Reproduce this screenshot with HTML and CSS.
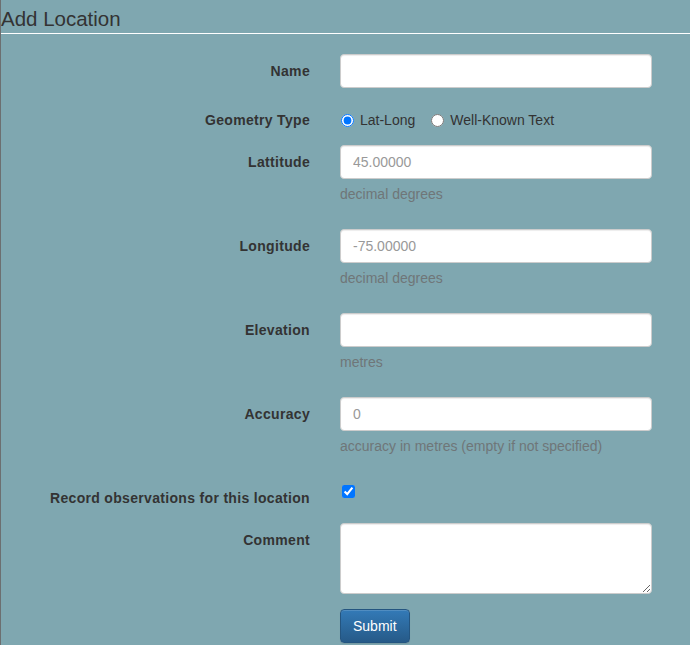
FILE: index.html
```html
<!DOCTYPE html>
<html lang="en">
<head>
<meta charset="utf-8">
<title>Add Location</title>
<link rel="stylesheet" href="styles.css">
</head>
<body>
<h2 class="title">Add Location</h2>
<form class="form">
  <div class="group">
    <label class="label" for="name">Name</label>
    <div class="field"><input class="input" id="name" type="text"></div>
  </div>
  <div class="group">
    <span class="label">Geometry Type</span>
    <div class="field radios">
      <label class="radio-inline"><input type="radio" name="geom" checked>Lat-Long</label>
      <label class="radio-inline second"><input type="radio" name="geom">Well-Known Text</label>
    </div>
  </div>
  <div class="group">
    <label class="label" for="lat">Lattitude</label>
    <div class="field"><input class="input" id="lat" type="text" placeholder="45.00000"><p class="help">decimal degrees</p></div>
  </div>
  <div class="group">
    <label class="label" for="lon">Longitude</label>
    <div class="field"><input class="input" id="lon" type="text" placeholder="-75.00000"><p class="help">decimal degrees</p></div>
  </div>
  <div class="group">
    <label class="label" for="elev">Elevation</label>
    <div class="field"><input class="input" id="elev" type="text"><p class="help">metres</p></div>
  </div>
  <div class="group">
    <label class="label" for="acc">Accuracy</label>
    <div class="field"><input class="input" id="acc" type="text" placeholder="0"><p class="help">accuracy in metres (empty if not specified)</p></div>
  </div>
  <div class="group">
    <label class="label" for="rec">Record observations for this location</label>
    <div class="field"><input class="check" id="rec" type="checkbox" checked></div>
  </div>
  <div class="group">
    <label class="label" for="comment">Comment</label>
    <div class="field"><textarea class="input textarea" id="comment"></textarea></div>
  </div>
  <div class="group">
    <span></span>
    <div class="field"><button class="btn" type="button">Submit</button></div>
  </div>
</form>
</body>
</html>
```

FILE: styles.css
```css
html, body {
  margin: 0;
  padding: 0;
}
body {
  background: #7fa7b0;
  border-left: 1px solid #6c6f70;
  min-height: 645px;
  box-sizing: border-box;
  font-family: "Liberation Sans", Arial, sans-serif;
  font-size: 14px;
  line-height: 20px;
  color: #333;
}
.title {
  margin: 0;
  padding: 7px 0 2px 0;
  font-size: 20.5px;
  line-height: 24px;
  font-weight: normal;
  color: #333;
  border-bottom: 1px solid #fff;
}
.form {
  padding-top: 20px;
}
.group {
  display: grid;
  grid-template-columns: 309px 312px;
  column-gap: 30px;
  margin-bottom: 15px;
}
.label {
  text-align: right;
  font-weight: bold;
  padding-top: 7px;
  line-height: 20px;
  letter-spacing: 0.32px;
  white-space: nowrap;
}
.field {
  box-sizing: border-box;
  min-height: 27px;
}
.input {
  display: block;
  box-sizing: border-box;
  width: 312px;
  height: 34px;
  padding: 6px 12px;
  margin: 0;
  border: 1px solid #ccc;
  border-radius: 4px;
  background: #fff;
  font-family: inherit;
  font-size: 14px;
  line-height: 20px;
  color: #555;
  box-shadow: inset 0 1px 1px rgba(0,0,0,.075);
  outline: none;
}
.input::placeholder {
  color: #999;
}
.textarea {
  height: 71px;
}
.help {
  margin: 5px 0 10px;
  color: #6f7678;
  line-height: 20px;
}
.radios {
  display: flex;
  padding-top: 7px;
  line-height: 20px;
}
.radio-inline {
  display: inline-flex;
  align-items: center;
  height: 20px;
}
.radio-inline input {
  width: 13px;
  height: 13px;
  margin: 0 6px 0 1px;
}
.radio-inline.second {
  margin-left: 15px;
}
.check {
  display: block;
  width: 13px;
  height: 13px;
  margin: 4px 0 0 2px;
}
.btn {
  display: block;
  box-sizing: border-box;
  height: 34px;
  padding: 6px 12px;
  border: 1px solid #245580;
  border-radius: 4px;
  background-image: linear-gradient(to bottom, #337ab7 0, #265a88 100%);
  color: #fff;
  font-family: inherit;
  font-size: 14px;
  line-height: 20px;
  box-shadow: inset 0 1px 0 rgba(255,255,255,.15), 0 1px 1px rgba(0,0,0,.075);
}
```
